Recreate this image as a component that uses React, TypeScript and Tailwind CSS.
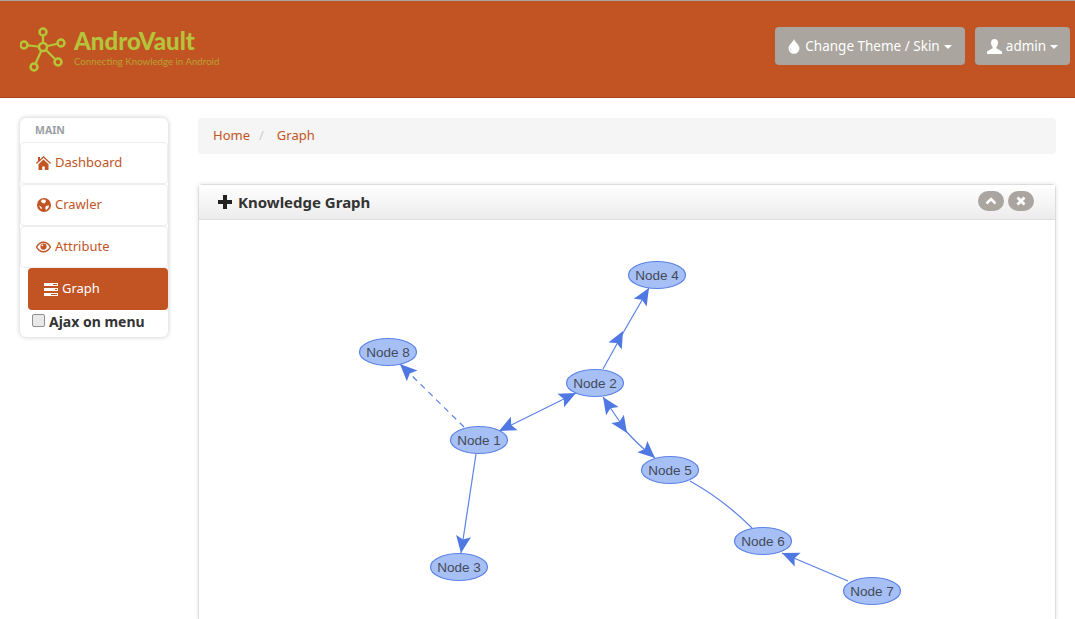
const uiFont = "font-['Tahoma','Noto_Sans','DejaVu_Sans',sans-serif]";

const Home = () => (
  <svg width="15" height="14" viewBox="0 0 15 14" fill="currentColor"><path d="M7.500 0 15 7l-.8.900L7.500 1.800.8 7.900 0 7l2-1.900V1h2v2.300z" /><path d="M2.500 8.200l5-4.600 5 4.600V14H8.800V10.500H6.200V14H2.500z" /></svg>
);
const Globe = () => (
  <svg width="14" height="14" viewBox="0 0 14 14"><circle cx="7" cy="7" r="7" fill="currentColor" /><path d="M5 1.500 8.500 1.800 9 3.500 7.500 5.500 5.500 5 3.800 3.500zM9 8l3-.7-.6 2.700-2.400 2.200-.8-2.200zM2 7.500 4.500 9l.5 2-1.500-.5z" fill="#fff" /></svg>
);
const Eye = () => (
  <svg width="16" height="12" viewBox="0 0 16 12"><path d="M.6 6C2.500 2.800 5 1 8 1s5.500 1.800 7.400 5C13.500 9.200 11 11 8 11S2.500 9.200.6 6Z" fill="none" stroke="currentColor" strokeWidth="1.500" /><circle cx="8" cy="5.500" r="3.300" fill="currentColor" /><circle cx="6.800" cy="4.200" r="1" fill="#fff" /></svg>
);
const Tasks = () => (
  <svg width="14" height="13" viewBox="0 0 14 13" fill="#fff"><path d="M0 0h14v3H0zM0 5h14v3H0zM0 10h14v3H0z" /><path d="M9 1h4v1H9zM11 6h2v1h-2zM7 11h6v1H7z" fill="#c25424" /></svg>
);
const Drop = () => (
  <svg width="12" height="15" viewBox="0 0 12 15"><path d="M6 0c1 3 5.500 6 5.500 9.300A5.500 5.500 0 0 1 .5 9.300C.5 6 5 3 6 0Z" fill="#fff" /><path d="M3 8.500c-1 2.500.5 4.200 2.500 4.500-2.700-.2-4-2.500-2.500-4.500Z" fill="#aaa59e" /></svg>
);
const User = () => (
  <svg width="15" height="15" viewBox="0 0 15 15" fill="#fff"><path d="M7.500 0C9.700 0 11 1.600 11 3.800c0 1.700-.7 3.300-1.600 4.200v1.200L15 12.500V15H0v-2.500l5.600-3.300V8C4.700 7.100 4 5.500 4 3.800 4 1.600 5.300 0 7.500 0Z" /></svg>
);
const Caret = () => <span className="ml-1 inline-block h-0 w-0 border-x-4 border-t-4 border-x-transparent border-t-white align-middle" />;

const nodes: [string, number, number][] = [
  ["Node 1", 479, 440],
  ["Node 2", 595, 383],
  ["Node 3", 459, 567],
  ["Node 4", 657, 275],
  ["Node 5", 670, 470],
  ["Node 6", 763, 541],
  ["Node 7", 872, 591],
  ["Node 8", 388, 352],
];

function arrow(fx: number, fy: number, tx: number, ty: number) {
  const d = Math.hypot(tx - fx, ty - fy);
  const ux = (tx - fx) / d;
  const uy = (ty - fy) / d;
  const L = 17;
  const W = 7.500;
  const bx = tx - ux * L;
  const by = ty - uy * L;
  const nx = tx - ux * L * 0.8;
  const ny = ty - uy * L * 0.8;
  return `${tx},${ty} ${bx - uy * W},${by + ux * W} ${nx},${ny} ${bx + uy * W},${by - ux * W}`;
}

const arrows: [number, number, number, number][] = [
  [464, 427, 400, 364],
  [576, 393, 499, 431],
  [499, 431, 576, 393],
  [603, 369, 623, 331],
  [623, 331, 649, 288],
  [626, 432, 603, 397],
  [603, 397, 627, 433],
  [627, 433, 655, 458],
  [476, 454, 461, 553],
  [848, 581, 782, 553],
];

function Graph() {
  return (
    <svg viewBox="199 220 856 399" className="block h-[399px] w-[856px]">
      <g fill="none" stroke="#5b82e6" strokeWidth="1.200">
        <path d="M464 427 400 364" strokeDasharray="6 5" />
        <path d="M499 431 576 393" />
        <path d="M603 369 623 333 649 288" />
        <path d="M603 397 626 431 Q 638 445 655 458" />
        <path d="M476 454 461 553" />
        <path d="M690 481 Q 724 500 752 528" />
        <path d="M848 581 782 553" />
      </g>
      <g fill="#4f78e2">
        {arrows.map((a, i) => (
          <polygon key={i} points={arrow(a[0], a[1], a[2], a[3])} />
        ))}
      </g>
      {nodes.map(([label, x, y]) => (
        <g key={label}>
          <ellipse cx={x} cy={y} rx="28.500" ry="13.500" fill="#a6c0f6" stroke="#5b82e6" strokeWidth="1.200" />
          <text x={x} y={y + 5} textAnchor="middle" fontSize="13.500" fill="#434a56" fontFamily="'Liberation Sans', Arial, sans-serif">
            {label}
          </text>
        </g>
      ))}
    </svg>
  );
}

function Logo() {
  const sats: [number, number][] = [[43, 34], [61, 45], [24, 47], [58, 64], [34, 69]];
  return (
    <div className="ml-[20px] flex items-center">
      <svg width="46" height="46" viewBox="20 28 46 46" className="shrink-0">
        <g stroke="#b5c636" strokeWidth="2.200" fill="none">
          {sats.map(([x, y], i) => (
            <line key={i} x1="43" y1="49" x2={x} y2={y} />
          ))}
        </g>
        <g stroke="#b5c636" strokeWidth="2.500" fill="#c25424">
          <circle cx="43" cy="49" r="4" />
          {sats.map(([x, y], i) => (
            <circle key={i} cx={x} cy={y} r="3.500" />
          ))}
        </g>
      </svg>
      <div className="ml-[8px] mt-[1px]">
        <div className="mb-[5px] font-['Lato',sans-serif] text-[24px] leading-[20px] font-black text-[#b5c43a]">AndroVault</div>
        <div className="font-['Lato',sans-serif] text-[9.700px] leading-[11px] whitespace-nowrap text-[#b8a030]">Connecting Knowledge in Android</div>
      </div>
    </div>
  );
}

function NavItem({ icon, label }: { icon: React.ReactNode; label: string }) {
  return (
    <div className="flex h-[42px] items-center gap-[4px] rounded border border-[#eeeeee] pl-[15px] text-[13px] text-[#c25424]">
      <span className="flex w-[15px] justify-center">{icon}</span>
      <span>{label}</span>
    </div>
  );
}

export default function App() {
  return (
    <div className={`h-[619px] w-[1075px] overflow-hidden bg-white ${uiFont} text-[14px] text-[#333333]`}>
      <header className="flex h-[98px] items-center justify-between border-t border-b border-t-[#a9a49c] border-b-[#a6471d] bg-[#c25424]">
        <div className="-mt-[1px]"><Logo /></div>
        <div className="mr-[5px] -mt-[6px] flex gap-[10px]">
          <div className="flex h-[38px] w-[190px] items-center justify-center gap-[5px] rounded bg-[#aaa59e] text-[13.500px] text-white">
            <Drop />
            <span>Change Theme / Skin<Caret /></span>
          </div>
          <div className="flex h-[38px] w-[95px] items-center justify-center gap-[4px] rounded bg-[#aaa59e] text-[13.500px] text-white">
            <User />
            <span>admin<Caret /></span>
          </div>
        </div>
      </header>
      <div className="flex items-start gap-[30px] pt-[20px] pl-[20px]">
        <aside className="h-[219px] w-[148px] shrink-0 rounded-md bg-white shadow-[0_0_5px_rgba(0,0,0,0.22)]">
          <div className="h-[24px] pt-[5px] pl-[15px] text-[10.500px] leading-[14px] font-bold text-[#9a9ea3]">MAIN</div>
          <NavItem icon={<span className="text-[#c25424]"><Home /></span>} label="Dashboard" />
          <NavItem icon={<Globe />} label="Crawler" />
          <NavItem icon={<Eye />} label="Attribute" />
          <div className="ml-[8px] flex h-[42px] items-center gap-[4px] rounded bg-[#c25424] pl-[16px] text-[13px] text-white">
            <Tasks />
            <span>Graph</span>
          </div>
          <div className="flex items-center pl-[12px] pt-[1px]">
            <span className="h-[13px] w-[13px] -mt-[2px] rounded-[2px] border border-[#8f8f8f] bg-[#e8e8e8]" />
            <span className="ml-[4px] text-[14px] font-bold">Ajax on menu</span>
          </div>
        </aside>
        <main className="w-[858px] shrink-0">
          <nav className="flex h-[36px] items-center rounded bg-[#f5f5f5] pl-[15px] text-[13px] text-[#c25424]">
            <span>Home</span>
            <span className="mx-[9px] text-[#cccccc]">/</span>
            <span className="ml-[4px]">Graph</span>
          </nav>
          <section className="mt-[30px] rounded-t border border-[#dddddd] shadow-[0_0_4px_rgba(0,0,0,0.12)]">
            <div className="flex h-[35px] items-center justify-between border-b border-[#dedede] bg-gradient-to-b from-[#ffffff] to-[#ececec] pr-[21px] pl-[19px]">
              <div className="flex items-center gap-[6px] text-[15px] font-bold text-[#333333]">
                <svg width="14" height="14" viewBox="0 0 14 14" fill="#222"><path d="M5 0h4v5h5v4H9v5H5V9H0V5h5z" /></svg>
                Knowledge Graph
              </div>
              <div className="-mt-[2px] flex gap-[4px]">
                <span className="flex h-[20px] w-[26px] items-center justify-center rounded-full bg-[#aaa59e]">
                  <svg width="12" height="8" viewBox="0 0 12 8"><path d="M1.500 6.500 6 2l4.500 4.500" fill="none" stroke="#fff" strokeWidth="2.500" /></svg>
                </span>
                <span className="flex h-[20px] w-[26px] items-center justify-center rounded-full bg-[#aaa59e]">
                  <svg width="10" height="10" viewBox="0 0 10 10"><path d="M1.500 1.500l7 7M8.500 1.500l-7 7" fill="none" stroke="#fff" strokeWidth="2.800" /></svg>
                </span>
              </div>
            </div>
            <Graph />
          </section>
        </main>
      </div>
    </div>
  );
}
